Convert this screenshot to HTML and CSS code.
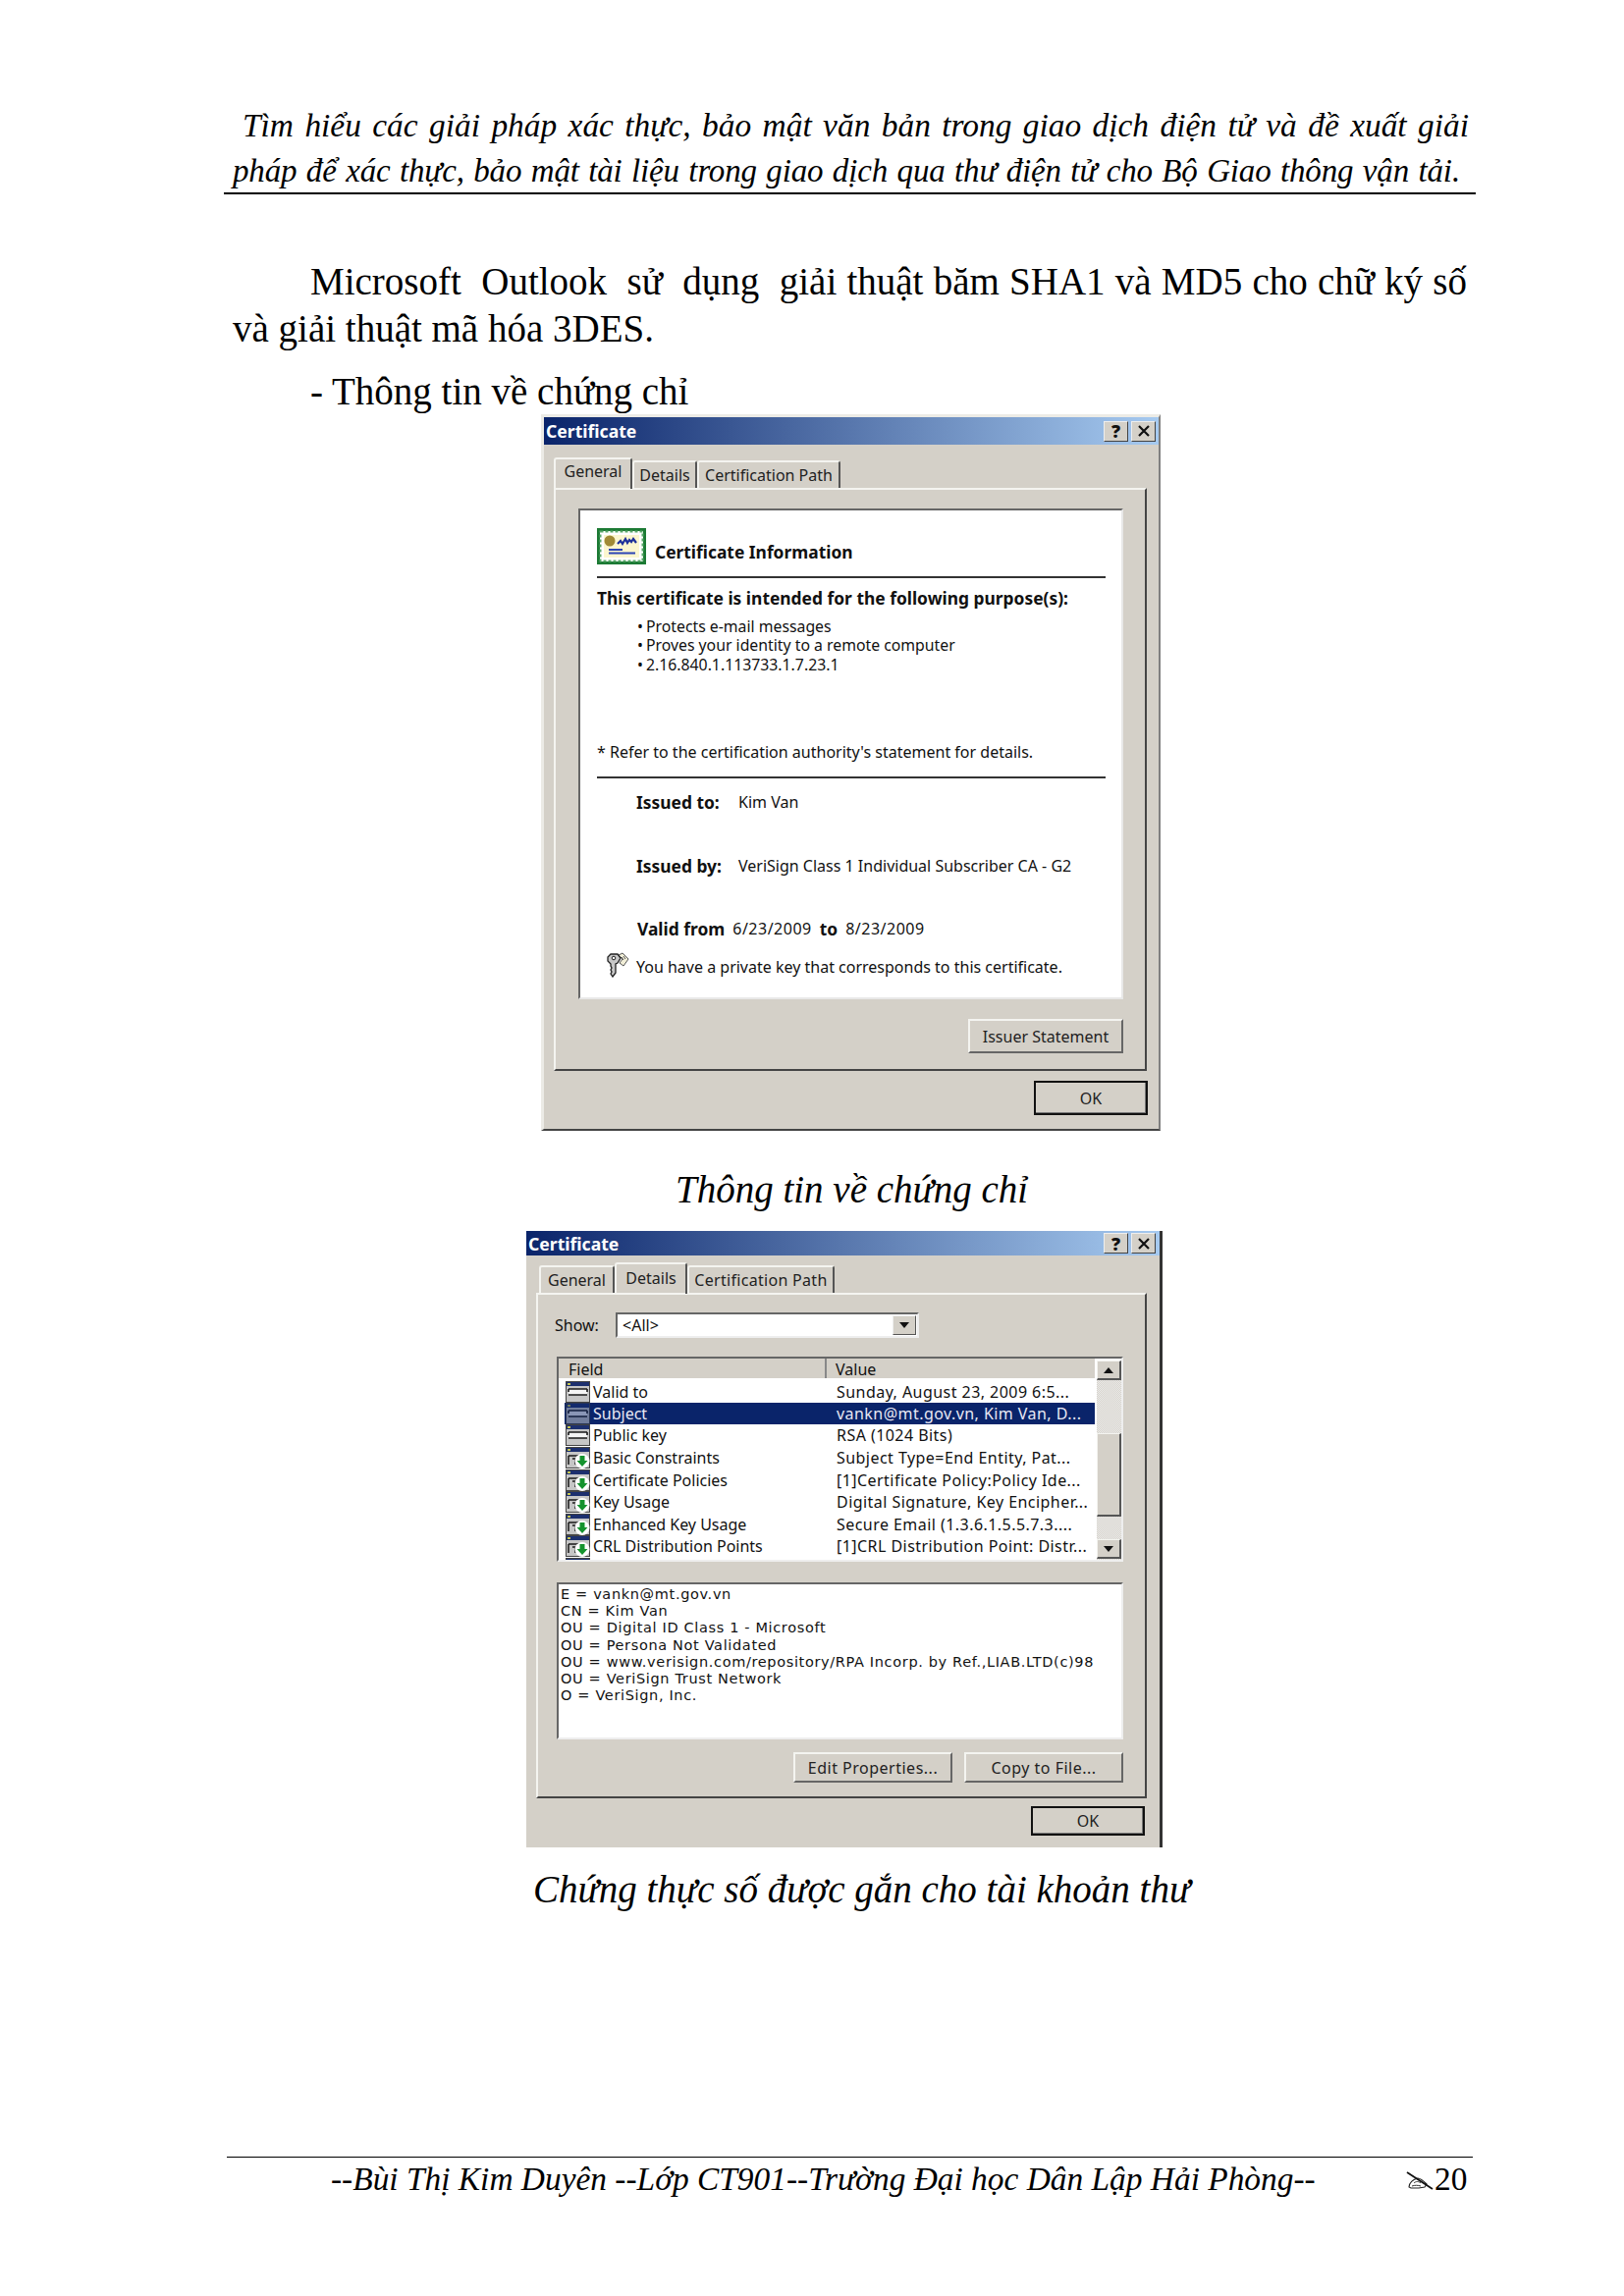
FILE: index.html
```html
<!DOCTYPE html>
<html lang="vi">
<head>
  <title>Thông tin về chứng chỉ</title>
  <meta charset="UTF-8" />
  <link rel="stylesheet" href="styles.css">
</head>
<body>
  <svg class="sprites" width="0" height="0">
    <symbol id="field-plain" viewBox="0 0 25 22">
      <rect x="0.5" y="0.5" width="24" height="21" fill="#c6c6c6" stroke="#444"/>
      <rect x="1" y="1" width="23" height="4" fill="#1c2f6e"/>
      <rect x="2" y="2" width="3" height="2" fill="#c8c850"/>
      <rect x="3" y="8" width="19" height="6" fill="#f4f4f4"/>
      <path d="M3 8h19M3 8v3M22 8v3M3 14h19" stroke="#1a1a1a" stroke-width="1.6" fill="none"/>
    </symbol>
    <symbol id="field-arrow" viewBox="0 0 25 22">
      <rect x="0.5" y="0.5" width="24" height="21" fill="#c6c6c6" stroke="#444"/>
      <rect x="1" y="1" width="23" height="4" fill="#1c2f6e"/>
      <rect x="2" y="2" width="3" height="2" fill="#c8c850"/>
      <path d="M3 9h10M3 9v9M7 12h3v6" stroke="#1a1a1a" stroke-width="1.5" fill="none"/>
      <circle cx="17" cy="14.5" r="7.5" fill="#fff"/>
      <path d="M14.5 9h5v5h3l-5.5 6-5.5-6h3z" fill="#15932e"/>
    </symbol>
    <symbol id="close-x" viewBox="0 0 14 12">
      <path d="M2 1l10 10M12 1L2 11" stroke="#111" stroke-width="2.2"/>
    </symbol>
  </svg>

  <main class="page">
    <header class="doc-head">
      <p class="head-one">Tìm hiểu các giải pháp xác thực, bảo mật văn bản trong giao dịch điện tử và đề xuất giải</p>
      <p class="head-two">pháp để xác thực, bảo mật tài liệu trong giao dịch qua thư điện tử cho Bộ Giao thông vận tải.</p>
    </header>

    <p class="body-one">Microsoft  Outlook  sử  dụng  giải thuật băm SHA1 và MD5 cho chữ ký số</p>
    <p class="body-two">và giải thuật mã hóa 3DES.</p>
    <p class="body-three">- Thông tin về chứng chỉ</p>

    <section class="dialog dialog-general">
      <div class="titlebar">
        <span>Certificate</span>
        <div class="title-btns"><b class="title-btn">?</b><b class="title-btn"><svg class="close-icon"><use href="#close-x"/></svg></b></div>
      </div>
      <div class="tabs">
        <span class="tab tab-on tab-w1">General</span>
        <span class="tab tab-w2">Details</span>
        <span class="tab tab-w3">Certification Path</span>
      </div>
      <div class="panel">
        <div class="info-box">
          <div class="info-head">
            <svg class="cert-icon" viewBox="0 0 50 37">
              <rect width="50" height="37" fill="#1c7a34"/>
              <rect x="3" y="3" width="44" height="31" fill="#fff"/>
              <rect x="3.5" y="3.5" width="43" height="30" fill="none" stroke="#5aa86a" stroke-width="2" stroke-dasharray="3 2"/>
              <rect x="7" y="7" width="36" height="23" fill="#fbf6cf"/>
              <circle cx="13" cy="13" r="5.5" fill="#a08a35"/>
              <path d="M21 16l3-3 2 3 3-5 2 4 2-3 2 2 2-3 3 4" fill="none" stroke="#1c2f9a" stroke-width="2.2"/>
              <path d="M12 22h14M12 25.5h27" stroke="#2c45b5" stroke-width="1.8"/>
            </svg>
            <strong class="info-title">Certificate Information</strong>
          </div>
          <hr class="rule">
          <p class="purpose">This certificate is intended for the following purpose(s):</p>
          <ul class="purpose-list">
            <li>Protects e-mail messages</li>
            <li>Proves your identity to a remote computer</li>
            <li>2.16.840.1.113733.1.7.23.1</li>
          </ul>
          <p class="refer">* Refer to the certification authority's statement for details.</p>
          <hr class="rule rule-two">
          <p class="issued issued-to"><b>Issued to:</b><span>Kim Van</span></p>
          <p class="issued issued-by"><b>Issued by:</b><span>VeriSign Class 1 Individual Subscriber CA - G2</span></p>
          <p class="valid"><b>Valid from</b><span>6/23/2009</span><b>to</b><span>8/23/2009</span></p>
          <p class="key-note">
            <svg class="key-icon" viewBox="0 0 25 26">
              <path d="M14 3l4-2 6 6-5 7-4-3 3-4z" fill="#f2efd8" stroke="#555"/>
              <path d="M17 5l2 3M19 4l2 3" stroke="#555"/>
              <path d="M6 2h7l3 4-3 5-2 1v9l-3 4-2-3 1-2-1-2 1-2-1-2V12L3 9V5z" fill="#c8c8c8" stroke="#222" stroke-width="1.3"/>
              <circle cx="9" cy="6" r="1.8" fill="#fff" stroke="#222"/>
            </svg>
            You have a private key that corresponds to this certificate.
          </p>
        </div>
        <div class="panel-foot"><button class="btn btn-issuer">Issuer Statement</button></div>
      </div>
      <div class="dialog-foot"><button class="btn btn-ok btn-ok-one">OK</button></div>
    </section>

    <p class="caption caption-one">Thông tin về chứng chỉ</p>

    <section class="dialog dialog-details">
      <div class="titlebar titlebar-two">
        <span>Certificate</span>
        <div class="title-btns"><b class="title-btn">?</b><b class="title-btn"><svg class="close-icon"><use href="#close-x"/></svg></b></div>
      </div>
      <div class="tabs tabs-two">
        <span class="tab tab-w4">General</span>
        <span class="tab tab-on tab-w5">Details</span>
        <span class="tab tab-w6">Certification Path</span>
      </div>
      <div class="panel panel-two">
        <div class="show-row">
          <label class="show-label">Show:</label>
          <div class="combo"><span>&lt;All&gt;</span><i class="combo-btn"><em class="arrow-down"></em></i></div>
        </div>
        <div class="field-list">
          <div class="field-main">
            <div class="field-head"><span class="col-field">Field</span><span class="col-value">Value</span></div>
            <div class="field-rows">
              <div class="field-row"><svg class="field-icon"><use href="#field-plain"/></svg><span class="f-name">Valid to</span><span class="f-val">Sunday, August 23, 2009 6:5...</span></div>
              <div class="field-row field-sel"><svg class="field-icon"><use href="#field-plain"/></svg><span class="f-name">Subject</span><span class="f-val">vankn@mt.gov.vn, Kim Van, D...</span></div>
              <div class="field-row"><svg class="field-icon"><use href="#field-plain"/></svg><span class="f-name">Public key</span><span class="f-val">RSA (1024 Bits)</span></div>
              <div class="field-row"><svg class="field-icon"><use href="#field-arrow"/></svg><span class="f-name">Basic Constraints</span><span class="f-val">Subject Type=End Entity, Pat...</span></div>
              <div class="field-row"><svg class="field-icon"><use href="#field-arrow"/></svg><span class="f-name">Certificate Policies</span><span class="f-val">[1]Certificate Policy:Policy Ide...</span></div>
              <div class="field-row"><svg class="field-icon"><use href="#field-arrow"/></svg><span class="f-name">Key Usage</span><span class="f-val">Digital Signature, Key Encipher...</span></div>
              <div class="field-row"><svg class="field-icon"><use href="#field-arrow"/></svg><span class="f-name">Enhanced Key Usage</span><span class="f-val">Secure Email (1.3.6.1.5.5.7.3....</span></div>
              <div class="field-row"><svg class="field-icon"><use href="#field-arrow"/></svg><span class="f-name">CRL Distribution Points</span><span class="f-val">[1]CRL Distribution Point: Distr...</span></div>
              <div class="field-row"><svg class="field-icon"><use href="#field-arrow"/></svg></div>
            </div>
          </div>
          <div class="scrollbar">
            <i class="scroll-btn"><em class="arrow-up"></em></i>
            <i class="scroll-gap-a"></i>
            <i class="scroll-thumb"></i>
            <i class="scroll-gap-b"></i>
            <i class="scroll-btn"><em class="arrow-down"></em></i>
          </div>
        </div>
        <div class="detail-box">
          <div>E = vankn@mt.gov.vn</div>
          <div>CN = Kim Van</div>
          <div>OU = Digital ID Class 1 - Microsoft</div>
          <div>OU = Persona Not Validated</div>
          <div>OU = www.verisign.com/repository/RPA Incorp. by Ref.,LIAB.LTD(c)98</div>
          <div>OU = VeriSign Trust Network</div>
          <div>O = VeriSign, Inc.</div>
        </div>
        <div class="detail-btns">
          <button class="btn btn-wide">Edit Properties...</button>
          <button class="btn btn-wide">Copy to File...</button>
        </div>
      </div>
      <div class="dialog-foot dialog-foot-two"><button class="btn btn-ok btn-ok-two">OK</button></div>
    </section>

    <p class="caption caption-two">Chứng thực số được gắn cho tài khoản thư</p>

    <footer class="doc-foot">
      <span class="foot-text">--Bùi Thị Kim Duyên --Lớp CT901--Trường Đại học Dân Lập Hải Phòng--</span>
      <svg class="foot-icon" viewBox="0 0 28 20">
        <path d="M3 17c0-4 4-8 9-9 3 0 6 3 9 6l-2 3-6 1H5z" fill="#fff" stroke="#222" stroke-width="1.1"/>
        <path d="M8 13c2-2 5-2 7 0M6 16c3-1 6-1 9 0" fill="none" stroke="#333"/>
        <path d="M1 2l26 17" stroke="#111" stroke-width="1.8"/>
      </svg>
      <span class="foot-num">20</span>
    </footer>
  </main>
</body>
</html>
```

FILE: styles.css
```css
body { margin: 0; background: #fff; color: #000; font-family: "Liberation Serif", serif; }
p { margin: 0; }
.sprites { display: block; height: 0; overflow: hidden; }
.page { width: 1654px; height: 2339px; box-sizing: border-box; padding: 104px 151px 0 228px; }

/* document text */
.doc-head { border-bottom: 2px solid #000; font-style: italic; font-size: 33.4px; line-height: 47px; height: 94px; box-sizing: border-box; }
.head-one, .head-two, .body-one { text-align: justify; text-align-last: justify; white-space: pre-wrap; }
.head-one { margin: 0 7px 0 19px; }
.head-two { margin: 0 16px 0 9px; font-size: 33px; letter-spacing: -0.15px; }
.body-one, .body-two, .body-three { font-size: 39px; line-height: 48px; }
.body-one { margin: 65px 9px 0 88px; }
.body-two { margin-left: 9px; }
.body-three { margin: 17px 0 0 88px; line-height: 46px; }
.caption { font-style: italic; font-size: 39px; line-height: 48px; }
.caption-one { margin-top: 36px; padding-left: 460px; }
.caption-two { margin-top: 19px; padding-left: 315px; }

/* dialog frame */
.dialog { background: #d4d0c8; font-family: "Noto Sans", sans-serif; font-size: 16px; color: #111; box-sizing: border-box; }
.dialog-general { margin: 0 0 0 323px; width: 631px; height: 730px; border: 3px solid #ecebe6; border-right-color: #808080; border-bottom-color: #444; border-bottom-width: 2px; border-right-width: 2px; }
.dialog-details { margin: 18px 0 0 308px; width: 648px; height: 628px; border-right: 3px solid #333; }
.titlebar { height: 28px; display: flex; align-items: center; justify-content: space-between; padding: 0 3px 0 2px; background: linear-gradient(90deg, #0a246a, #a6caf0); color: #fff; font-weight: 700; font-size: 17.6px; }
.titlebar-two { height: 25px; padding-right: 4px; }
.title-btns { display: flex; gap: 3px; }
.title-btn { width: 25px; height: 21px; display: flex; align-items: center; justify-content: center; background: #d4d0c8; color: #111; font-size: 18px; line-height: 20px; border: 1px solid #eee; border-right-color: #444; border-bottom-color: #444; box-sizing: border-box; }
.close-icon { width: 14px; height: 12px; }

/* tabs */
.tabs { display: flex; align-items: flex-end; height: 44px; padding-left: 10px; }
.tabs-two { height: 38px; padding-left: 13px; }
.tab { box-sizing: border-box; height: 28px; line-height: 26px; text-align: center; border-top: 2px solid #f4f4f0; border-left: 2px solid #f4f4f0; border-right: 2px solid #555; border-radius: 3px 3px 0 0; font-size: 16px; color: #222; }
.tab-on { height: 32px; line-height: 25px; position: relative; z-index: 1; margin-bottom: -1px; }
.tab-w1 { width: 80px; }
.tab-w2 { width: 66px; }
.tab-w3 { width: 146px; }
.tab-w4 { width: 77px; }
.tab-w5 { width: 74px; line-height: 28px; }
.tab-w6 { width: 150px; letter-spacing: 0.3px; }

/* tab panel */
.panel { box-sizing: border-box; margin-left: 10px; width: 604px; height: 594px; padding: 19px 0 0 23px; border: 2px solid #f4f4f0; border-right-color: #444; border-bottom-color: #444; }
.panel-two { margin-left: 10px; width: 622px; height: 515px; padding: 18px 0 0 20px; }
.info-box { box-sizing: border-box; width: 555px; height: 500px; background: #fff; padding: 18px 0 0 17px; border: 2px solid #666; border-right-color: #e8e8e8; border-bottom-color: #e8e8e8; font-size: 16px; }
.info-head { display: flex; align-items: flex-end; gap: 9px; height: 37px; }
.cert-icon { width: 50px; height: 37px; }
.info-title { font-size: 17.4px; line-height: 24px; position: relative; top: -1px; }
.rule { width: 518px; height: 2px; margin: 12px 0 0; border: 0; background: #333; }
.purpose { margin-top: 10px; font-weight: 700; font-size: 17.4px; line-height: 20px; }
.purpose-list { margin: 9.5px 0 0; padding: 0 0 0 41px; list-style: none; line-height: 19.5px; font-size: 15.8px; }
.purpose-list li::before { content: "•"; margin-right: 3px; }
.refer { margin-top: 68.5px; line-height: 20px; }
.rule-two { margin-top: 15px; }
.issued { display: grid; grid-template-columns: 104px 1fr; padding-left: 40px; line-height: 20px; }
.issued b, .valid b { font-size: 17.4px; }
.issued-to { margin-top: 14px; }
.issued-by { margin-top: 45px; }
.valid { margin-top: 44px; padding-left: 41px; line-height: 20px; display: flex; gap: 8px; }
.valid span { letter-spacing: 0.5px; }
.key-note { margin-top: 18px; padding-left: 8px; line-height: 20px; display: flex; align-items: center; gap: 7px; }
.key-icon { width: 25px; height: 26px; flex: none; margin-top: -4px; }
.panel-foot { display: flex; justify-content: flex-end; width: 555px; margin-top: 20px; }
.dialog-foot { display: flex; justify-content: flex-end; padding: 10px 11px 0 0; }
.dialog-foot-two { padding: 8px 15px 0 0; }

/* buttons */
.btn { box-sizing: border-box; padding: 0; background: #d4d0c8; font: inherit; font-size: 16px; color: #222; border: 2px solid #f4f4f0; border-right-color: #666; border-bottom-color: #666; }
.btn-issuer { width: 158px; height: 35px; }
.btn-ok { width: 116px; border: 2px solid #111; box-shadow: inset -1px -1px 0 #777; }
.btn-ok-one { height: 35px; }
.btn-ok-two { height: 30px; }
.btn-wide { width: 162px; height: 31px; letter-spacing: 0.5px; }

/* details tab */
.show-row { display: flex; align-items: center; height: 26px; font-size: 16px; }
.show-label { width: 62px; margin-left: -3px; }
.combo { box-sizing: border-box; width: 309px; height: 26px; background: #fff; display: flex; align-items: center; justify-content: space-between; padding: 0 1px 0 5px; border: 2px solid #666; border-right-color: #eee; border-bottom-color: #eee; }
.combo-btn { width: 24px; height: 20px; background: #d4d0c8; border: 1px solid #eee; border-right-color: #555; border-bottom-color: #555; display: flex; align-items: center; justify-content: center; box-sizing: border-box; }
.arrow-down { display: block; border: 5px solid transparent; border-top: 6px solid #111; border-bottom: 0; }
.arrow-up { display: block; border: 5px solid transparent; border-bottom: 6px solid #111; border-top: 0; }
.field-list { box-sizing: border-box; display: flex; margin: 19px 0 0 -1px; width: 577px; height: 209px; background: #fff; border: 2px solid #666; border-right-color: #eee; border-bottom-color: #eee; font-size: 16px; }
.field-main { width: 548px; overflow: hidden; }
.field-head { display: flex; height: 20px; background: #d4d0c8; line-height: 23px; }
.col-field { box-sizing: border-box; width: 273px; padding-left: 10px; border-right: 2px solid #888; }
.col-value { padding-left: 9px; }
.field-rows { height: 185px; overflow: hidden; padding-top: 2.5px; }
.field-row { display: flex; align-items: center; height: 22.6px; padding-left: 7px; white-space: nowrap; }
.field-icon { width: 25px; height: 22px; flex: none; }
.f-name { width: 248px; margin-left: 3px; flex: none; }
.f-val { letter-spacing: 0.45px; }
.field-sel { background: #0a246a; color: #e8e8f4; margin-left: 6px; padding-left: 1px; height: 22px; }
.field-sel .field-icon { opacity: 0.55; }
.scrollbar { display: flex; flex-direction: column; width: 25px; margin: 2px 0 0 2px; background: repeating-conic-gradient(#eee 0 25%, #d4d0c8 0 50%) 0 0 / 2px 2px; }
.scrollbar i { display: block; flex: none; box-sizing: border-box; }
.scroll-btn, .scroll-thumb { background: #d4d0c8; border: 1px solid #f4f4f0; border-right: 2px solid #555; border-bottom: 2px solid #555; display: flex !important; align-items: center; justify-content: center; }
.scroll-btn { height: 20px; }
.scroll-gap-a { height: 54px; }
.scroll-thumb { height: 85px; }
.scroll-gap-b { height: 23px; }
.detail-box { box-sizing: border-box; margin: 21px 0 0 -1px; width: 577px; height: 160px; background: #fff; padding: 2px 0 0 2px; border: 2px solid #666; border-right-color: #eee; border-bottom-color: #eee; font-family: "DejaVu Sans", sans-serif; font-size: 14.5px; letter-spacing: 0.65px; line-height: 17.2px; white-space: nowrap; }
.detail-btns { display: flex; justify-content: flex-end; gap: 12px; width: 576px; margin-top: 13px; }

/* footer */
.doc-foot { box-sizing: border-box; display: flex; align-items: center; margin: 248px 3px 0 3px; height: 44px; padding-left: 106px; border-top: 1.5px solid #000; font-size: 33.4px; }
.foot-text { width: 1095px; font-style: italic; }
.foot-icon { width: 28px; height: 20px; margin-top: 2px; }
.foot-num { margin-left: 1px; }
```
